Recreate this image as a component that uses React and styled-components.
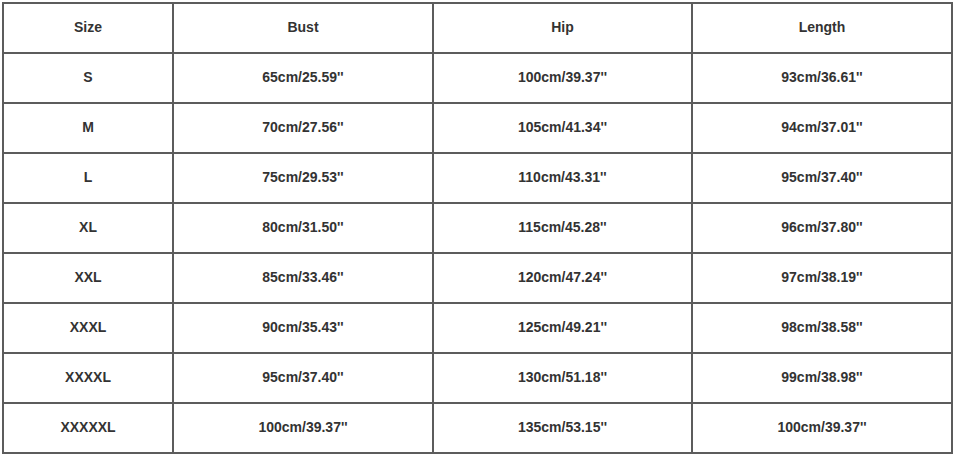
import React from "react";
import styled, { createGlobalStyle } from "styled-components";

const Global = createGlobalStyle`
  html, body { margin: 0; padding: 0; background: #fff; }
  body { font-family: "Liberation Sans", Arial, sans-serif; }
`;

const Page = styled.div`
  padding: 2px 0 0 2px;
`;

const Table = styled.table`
  border-collapse: collapse;
  width: 949px;
  table-layout: fixed;
`;

const Col = styled.col`
  width: ${(p) => p.$w}px;
`;

const Cell = styled.td`
  border: 2px solid #5c5c5c;
  height: 45px;
  padding: 0 0 3px 0;
  text-align: center;
  vertical-align: middle;
  font-size: 14px;
  font-weight: bold;
  color: #333;
  line-height: 16px;
`;

const HeadCell = styled(Cell).attrs({ as: "th" })``;

const widths = [170, 260, 259, 260];

const rows = [
  ["S", "65cm/25.59''", "100cm/39.37''", "93cm/36.61''"],
  ["M", "70cm/27.56''", "105cm/41.34''", "94cm/37.01''"],
  ["L", "75cm/29.53''", "110cm/43.31''", "95cm/37.40''"],
  ["XL", "80cm/31.50''", "115cm/45.28''", "96cm/37.80''"],
  ["XXL", "85cm/33.46''", "120cm/47.24''", "97cm/38.19''"],
  ["XXXL", "90cm/35.43''", "125cm/49.21''", "98cm/38.58''"],
  ["XXXXL", "95cm/37.40''", "130cm/51.18''", "99cm/38.98''"],
  ["XXXXXL", "100cm/39.37''", "135cm/53.15''", "100cm/39.37''"],
];

export default function App() {
  return (
    <Page>
      <Global />
      <Table>
        <colgroup>
          {widths.map((w, i) => (
            <Col key={i} $w={w} />
          ))}
        </colgroup>
        <thead>
          <tr>
            <HeadCell>Size</HeadCell>
            <HeadCell>Bust</HeadCell>
            <HeadCell>Hip</HeadCell>
            <HeadCell>Length</HeadCell>
          </tr>
        </thead>
        <tbody>
          {rows.map((r) => (
            <tr key={r[0]}>
              {r.map((c, i) => (
                <Cell key={i}>{c}</Cell>
              ))}
            </tr>
          ))}
        </tbody>
      </Table>
    </Page>
  );
}
